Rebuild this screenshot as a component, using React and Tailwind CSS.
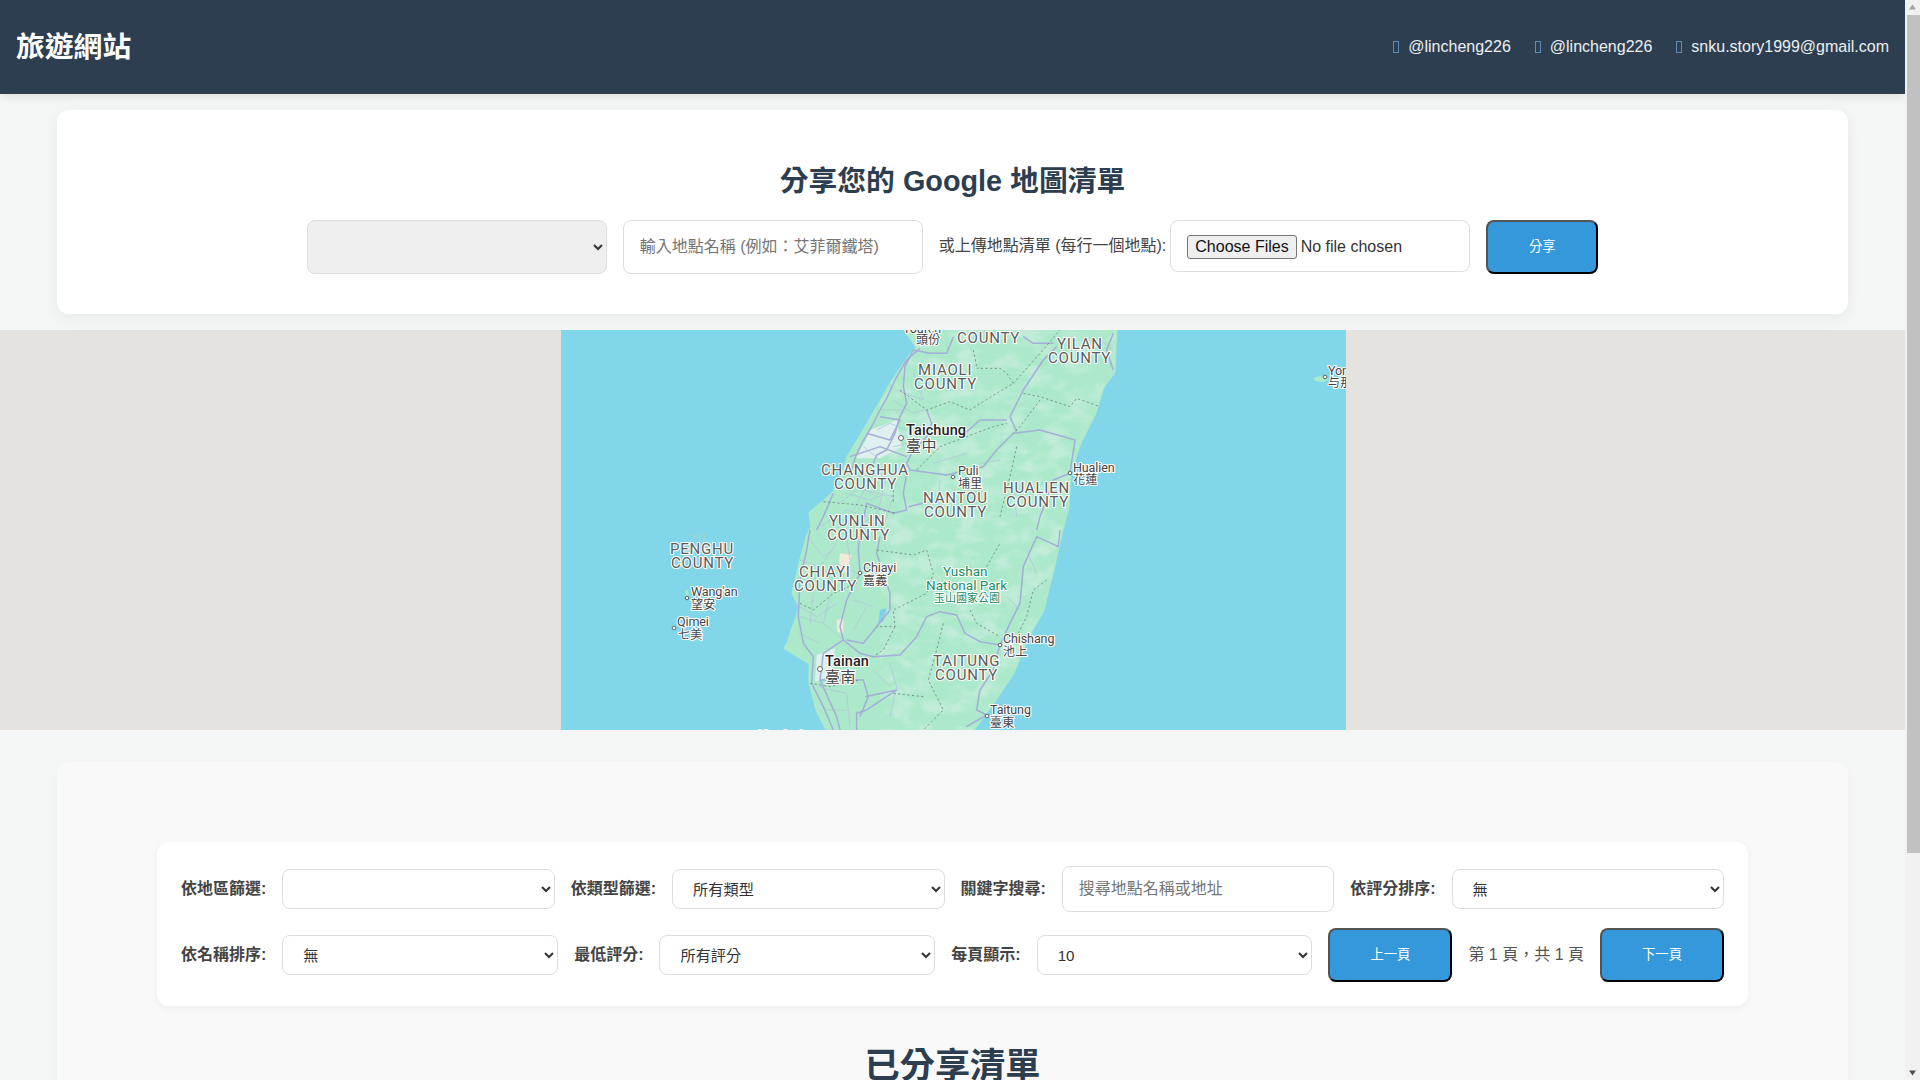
import React from 'react';

const COUNTY = 'county';
const labels = [
  // [text, x, y, kind]
  ['Toufen', 903, 333, 'small'], ['頭份', 916, 344, 'smallZh'],
  ['COUNTY', 957, 343, COUNTY],
  ['YILAN', 1057, 349, COUNTY], ['COUNTY', 1048, 363, COUNTY],
  ['MIAOLI', 918, 375, COUNTY], ['COUNTY', 914, 389, COUNTY],
  ['Taichung', 906, 435, 'city'], ['臺中', 906, 451, 'cityZh'],
  ['CHANGHUA', 821, 475, COUNTY], ['COUNTY', 834, 489, COUNTY],
  ['Puli', 958, 475, 'small'], ['埔里', 958, 488, 'smallZh'],
  ['Hualien', 1073, 472, 'small'], ['花蓮', 1073, 484, 'smallZh'],
  ['HUALIEN', 1003, 493, COUNTY], ['COUNTY', 1006, 507, COUNTY],
  ['NANTOU', 923, 503, COUNTY], ['COUNTY', 924, 517, COUNTY],
  ['YUNLIN', 829, 526, COUNTY], ['COUNTY', 827, 540, COUNTY],
  ['CHIAYI', 799, 577, COUNTY], ['COUNTY', 794, 591, COUNTY],
  ['Chiayi', 863, 572, 'small'], ['嘉義', 863, 585, 'smallZh'],
  ['Yushan', 943, 576, 'park'], ['National Park', 926, 590, 'park'], ['玉山國家公園', 934, 602, 'parkZh'],
  ['Chishang', 1003, 643, 'small'], ['池上', 1003, 656, 'smallZh'],
  ['TAITUNG', 933, 666, COUNTY], ['COUNTY', 935, 680, COUNTY],
  ['Tainan', 825, 666, 'city'], ['臺南', 825, 682, 'cityZh'],
  ['Taitung', 990, 714, 'small'], ['臺東', 990, 727, 'smallZh'],
  ['PENGHU', 670, 554, COUNTY], ['COUNTY', 671, 568, COUNTY],
  ["Wang'an", 691, 596, 'small'], ['望安', 691, 609, 'smallZh'],
  ['Qimei', 677, 626, 'small'], ['七美', 678, 639, 'smallZh'],
  ['Yon', 1328, 375, 'small'], ['与那', 1328, 387, 'smallZh'],
  ['Kaohsiung', 758, 741, 'city'],
];

const labelStyle = {
  county: { fontSize: 15, letterSpacing: 0.8, fill: '#5c5c5c' },
  city: { fontSize: 14.5, letterSpacing: 0.1, fill: '#222', fontWeight: 500 },
  cityZh: { fontSize: 15, letterSpacing: 0.5, fill: '#444' },
  small: { fontSize: 12.5, letterSpacing: -0.1, fill: '#444' },
  smallZh: { fontSize: 12, letterSpacing: 0.2, fill: '#444' },
  park: { fontSize: 13.5, fill: '#1c8a64' },
  parkZh: { fontSize: 11, fill: '#1c8a64' },
};

const dots = [[901, 438, 2.5], [953, 477, 1.8], [1070, 473, 1.8], [860, 573, 1.8], [1000, 645, 1.8], [820, 669, 2.5], [987, 716, 1.8], [687, 598, 1.8], [674, 628, 1.8], [1325, 377, 1.8]];

const LAND = 'M905 330 L917 347 L907 360 L893 380 L880 403 L870 420 L860 437 L848 457 L843 473 L833 493 L822 503 L810 513 L812 527 L807 537 L800 563 L793 593 L800 607 L788 643 L785 648 L810 663 L810 683 L817 710 L827 730 L973 730 L993 703 L1013 673 L1028 637 L1043 610 L1053 570 L1062 530 L1068 507 L1070 473 L1080 443 L1095 413 L1103 387 L1114 372 L1116 330 Z';

// coordinates below are in crop space (3x), hence the scale(1/3) groups
const northRoads = [
  'M420 55 L380 90 L345 150 L320 205 L300 240 L275 290 L245 340 L225 385 L215 420',
  'M520 20 L500 70 L450 70 L400 60 L375 110 L370 170 L380 220 L360 260 L345 310 L320 360 L290 375 L280 400',
  'M440 240 L455 280 L440 320 L400 360 L380 400 L390 420 L500 435 L610 410 L650 360 L700 310 L780 300 L885 330 L870 430',
  'M680 270 L600 270 L555 310',
  'M830 50 L790 90 L730 180 L690 260 L710 305',
  'M380 430 L370 490 L380 540 L340 550 L260 520 L250 570 L240 600',
  'M160 490 L130 560 L110 600',
  'M1000 10 L980 60 L1000 120',
  'M870 430 L820 450 L780 560 L770 600',
  'M385 530 L430 520',
  'M730 20 L760 40 L820 40',
  'M300 260 L360 270 L330 330 L260 310',
  'M210 380 L300 350 L380 380',
];
const northThin = [
  'M250 480 L340 500 L310 590', 'M180 520 L240 470 L290 500', 'M120 590 L200 540 L260 560',
  'M350 180 L430 210 L400 130', 'M290 300 L330 280 L380 300', 'M460 400 L560 370', 'M600 400 L660 390',
  'M230 440 L300 430 L360 470', 'M200 490 L270 510 L320 490', 'M150 560 L230 580 L300 560', 'M280 400 L260 470 L220 540',
  'M320 430 L300 520 L280 590', 'M340 210 L400 250 L430 240', 'M300 240 L370 240', 'M340 350 L390 340',
  'M250 350 L300 390', 'M480 450 L470 560', 'M700 470 L710 560', 'M960 30 L1000 60',
];
const northDashed = [
  'M360 180 L440 240 L510 215 L570 240 L650 190 L700 160 L680 130 L660 115 L590 115',
  'M700 160 L780 70 L840 0',
  'M730 190 L780 200 L870 230 L890 205 L960 230',
  'M780 210 L720 290 L700 310',
  'M410 420 L480 350 L640 290 L680 280',
  'M710 350 L690 440 L660 560',
  'M130 515 L240 525 L350 550',
  'M340 480 L340 520',
  'M580 60 L590 110',
];
const southRoads = [
  'M90 0 L80 60 L60 150 L55 260 L70 340 L100 380 L95 460 L130 530 L160 600',
  'M240 0 L235 60 L240 130 L200 210 L180 290 L190 330 L130 370 L120 450 L170 560 L180 600',
  'M300 20 L290 70 L330 190 L330 240 L290 290 L250 340 L200 330',
  'M190 330 L240 370 L280 380 L360 375 L410 320 L440 260 L480 245 L530 255 L555 310 L600 335 L660 345 L650 380 L640 420 L600 480 L590 540 L620 555',
  'M840 0 L835 50 L770 20 L730 110 L720 220 L690 280 L660 345',
  'M255 500 L350 480 L260 540 L230 550 L230 600',
  'M120 450 L250 450 L265 500 L240 560',
  'M620 555 L560 590',
];
const southThin = [
  'M60 260 L130 280 L190 330', 'M70 170 L170 100 L230 130', 'M90 30 L130 80 L160 60', 'M130 280 L150 200',
  'M260 230 L220 300', 'M330 470 L280 420', 'M680 200 L720 240', 'M740 60 L770 130',
  'M60 90 L120 110 L170 40', 'M40 220 L110 260 L170 220', 'M55 310 L120 340', 'M100 190 L90 280',
  'M200 20 L210 90', 'M150 130 L140 190', 'M110 470 L200 490 L210 590', 'M140 540 L200 540',
  'M260 120 L300 150', 'M220 210 L280 230', 'M330 400 L350 470 L330 560',
];
const southDashed = [
  'M290 60 L400 75 L440 60 L460 130 L440 190 L340 240 L345 290 L290 290',
  'M620 110 L660 40',
  'M570 240 L590 280 L660 320',
  'M490 280 L470 360 L445 450 L490 540 L430 600',
  'M340 490 L430 500',
  'M800 150 L760 180 L740 260 L700 340',
  'M60 220 L100 240 L160 190 L230 160',
  'M90 460 L150 470 L240 450',
  'M345 290 L310 360 L280 380',
];

const TaiwanMap = () => (
  <svg viewBox="561 330 785 400" className="block w-[785px] h-[400px]" fontFamily="Roboto, 'Noto Sans CJK TC', sans-serif">
    <defs>
      <clipPath id="land"><path d={LAND} /></clipPath>
      <filter id="terrain" x="0" y="0" width="100%" height="100%">
        <feTurbulence type="fractalNoise" baseFrequency="0.045 0.07" numOctaves="3" seed="7" />
        <feColorMatrix values="0 0 0 0 0.53  0 0 0 0 0.84  0 0 0 0 0.69  0 0 0 3.2 -1.35" />
      </filter>
    </defs>
    <rect x="561" y="330" width="785" height="400" fill="#82d6ea" />
    <path d={LAND} fill="#abe9ca" stroke="#abe9ca" strokeWidth="3" strokeLinejoin="round" />
    <path d="M690 535 L697 536 L704 533 L706 545 L698 538 Z" fill="none" stroke="#9fd8c0" strokeWidth="1" />
    <ellipse cx="687" cy="593" rx="1.5" ry="3" fill="#abe9ca" />
    <ellipse cx="1321" cy="379" rx="7" ry="3" fill="#abe9ca" />
    <g clipPath="url(#land)">
      {/* mountains: east of the plains only */}
      <rect x="880" y="330" width="240" height="400" filter="url(#terrain)" />
    </g>
    <g transform="translate(780 330) scale(0.3333)">
      <path d="M270 300 L350 270 L365 350 L300 385 L225 385 L255 335 Z" fill="#dff0ef" />
      {northThin.map((d) => <path key={d} d={d} fill="none" stroke="#b4c6df" strokeWidth="2.5" />)}
      {northRoads.map((d) => <path key={d} d={d} fill="none" stroke="#a4aed8" strokeWidth="4.5" strokeLinejoin="round" />)}
      {northDashed.map((d) => <path key={d} d={d} fill="none" stroke="#6b7b78" strokeWidth="2.2" strokeDasharray="7 7" />)}
    </g>
    <g transform="translate(780 530) scale(0.3333)">
      <path d="M110 375 L165 355 L155 435 L105 455 Z" fill="#dff0ef" />
      <path d="M180 70 L215 75 L200 130 L175 120 Z M170 270 L190 265 L190 310 L172 305 Z" fill="#f3e9d8" />
      <path d="M300 240 L320 235 L310 275 L295 280 Z" fill="#7fd0ea" />
      {southThin.map((d) => <path key={d} d={d} fill="none" stroke="#b4c6df" strokeWidth="2.5" />)}
      {southRoads.map((d) => <path key={d} d={d} fill="none" stroke="#a4aed8" strokeWidth="4.5" strokeLinejoin="round" />)}
      {southDashed.map((d) => <path key={d} d={d} fill="none" stroke="#6b7b78" strokeWidth="2.2" strokeDasharray="7 7" />)}
    </g>
    {dots.map(([cx, cy, r]) => (
      <circle key={`${cx}-${cy}`} cx={cx} cy={cy} r={r} fill="#fff" stroke="#555" strokeWidth="0.9" />
    ))}
    {labels.map(([text, x, y, kind]) => (
      <text
        key={`${text}-${x}-${y}`}
        x={x}
        y={y}
        {...labelStyle[kind]}
        stroke="#fff"
        strokeWidth="2.2"
        strokeLinejoin="round"
        paintOrder="stroke"
      >
        {text}
      </text>
    ))}
  </svg>
);

const HeaderLink = ({ text }) => (
  <a href="#" className="text-[#ecf0f1] flex items-center">
    {/* icon font is missing in the reference, so it shows as an empty box */}
    <span className="w-[6px] h-[12px] mr-[9px] border border-[#5d8db5]"></span>
    {text}
  </a>
);

const Filter = ({ label, children }) => (
  <>
    <label className="font-bold text-[#444] shrink-0">{label}</label>
    {children}
  </>
);

const Select = ({ children }) => (
  <select className="flex-1 min-w-0 h-10 px-4 text-[15.2px] text-[#333] bg-white border border-[#ddd] rounded-lg">
    {children}
  </select>
);

const PageButton = ({ children }) => (
  <button className="w-[124px] h-[54px] shrink-0 bg-[#3498db] text-white text-[13.33px] rounded-lg border-2 border-black [border-style:outset]">
    {children}
  </button>
);

const Scrollbar = () => (
  <aside className="w-[15px] shrink-0 flex flex-col bg-[#f1f1f1]">
    <svg viewBox="0 0 15 15" className="w-[15px] h-[15px] shrink-0">
      <path d="M7.5 4.5 L11 9.5 L4 9.5 Z" fill="#a3a3a3" />
    </svg>
    <div className="h-[838px] ml-[2px] bg-[#c1c1c1]"></div>
    <div className="flex-1"></div>
    <svg viewBox="0 0 15 15" className="w-[15px] h-[15px] shrink-0">
      <path d="M7.5 10.5 L11 5.5 L4 5.5 Z" fill="#505050" />
    </svg>
  </aside>
);

export default function App() {
  return (
    <div className="flex h-screen overflow-hidden bg-[#f4f6f6] text-[16px] leading-[1.6] text-[#333] font-['Liberation_Sans','Noto_Sans_CJK_TC',sans-serif]">
      <main className="w-[1905px] shrink-0 overflow-y-auto [scrollbar-width:none]">
        {/* Header */}
        <header className="flex justify-between items-center px-4 py-6 bg-[#2c3e50] text-white shadow-[0_2px_10px_rgba(0,0,0,0.1)]">
          <h1 className="text-[28.8px] font-bold">旅遊網站</h1>
          <nav className="flex gap-6">
            <HeaderLink text="@lincheng226" />
            <HeaderLink text="@lincheng226" />
            <HeaderLink text="snku.story1999@gmail.com" />
          </nav>
        </header>

        {/* Share form */}
        <section className="mx-[57px] mt-4 pt-12 pb-10 bg-white rounded-xl shadow-[0_4px_15px_rgba(0,0,0,0.05)]">
          <h2 className="text-[28.8px] font-bold text-[#2c3e50] text-center mb-4">分享您的 Google 地圖清單</h2>
          <form className="flex justify-center items-start gap-4">
            <select className="w-[300px] h-[54px] px-4 bg-[#efefef] border border-[#ddd] rounded-lg">
              <option></option>
            </select>
            <input
              type="text"
              placeholder="輸入地點名稱 (例如：艾菲爾鐵塔)"
              className="w-[300px] h-[54px] px-4 bg-white border border-[#ddd] rounded-lg placeholder:text-[#757575]"
            />
            <div className="flex items-start gap-1">
              <label className="mt-[13px] text-[#444]">或上傳地點清單 (每行一個地點):</label>
              <input
                type="file"
                multiple
                className="w-[300px] h-[52px] px-4 py-[13px] bg-white border border-[#ddd] rounded-lg text-[#333] file:mr-1 file:px-[7px] file:py-0 file:h-[24px] file:leading-[22px] file:text-[#111] file:bg-[#efefef] file:border file:border-[#767676] file:rounded-[3px]"
              />
            </div>
            <button type="button" className="w-[112px] h-[54px] bg-[#3498db] text-white text-[13.33px] rounded-lg border-2 border-black [border-style:outset]">
              分享
            </button>
          </form>
        </section>

        {/* Map */}
        <div className="mt-4 h-[400px] bg-[#e5e3df] flex overflow-hidden">
          <div className="w-[561px] shrink-0"></div>
          <TaiwanMap />
        </div>

        {/* Shared lists */}
        <section className="mx-[57px] mt-8 mb-4 px-[100px] pt-20 pb-[243px] bg-[#f9f9f9] rounded-xl shadow-[0_4px_15px_rgba(0,0,0,0.02)]">
          <div className="flex flex-col gap-4 p-6 bg-white rounded-xl shadow-[0_2px_8px_rgba(0,0,0,0.05)]">
            <div className="flex items-center gap-4">
              <Filter label="依地區篩選:">
                <Select><option></option></Select>
              </Filter>
              <Filter label="依類型篩選:">
                <Select><option>所有類型</option></Select>
              </Filter>
              <Filter label="關鍵字搜尋:">
                <input
                  type="text"
                  placeholder="搜尋地點名稱或地址"
                  className="flex-1 min-w-0 h-[46px] px-4 bg-white border border-[#ddd] rounded-lg placeholder:text-[#757575]"
                />
              </Filter>
              <Filter label="依評分排序:">
                <Select><option>無</option></Select>
              </Filter>
            </div>
            <div className="flex items-center gap-4">
              <Filter label="依名稱排序:">
                <Select><option>無</option></Select>
              </Filter>
              <Filter label="最低評分:">
                <Select><option>所有評分</option></Select>
              </Filter>
              <Filter label="每頁顯示:">
                <Select><option>10</option></Select>
              </Filter>
              <PageButton>上一頁</PageButton>
              <span className="shrink-0 text-[#555]">第 1 頁，共 1 頁</span>
              <PageButton>下一頁</PageButton>
            </div>
          </div>
          <h2 className="mt-8 text-[35.2px] font-bold text-[#2c3e50] text-center">已分享清單</h2>
        </section>
      </main>
      <Scrollbar />
    </div>
  );
}
